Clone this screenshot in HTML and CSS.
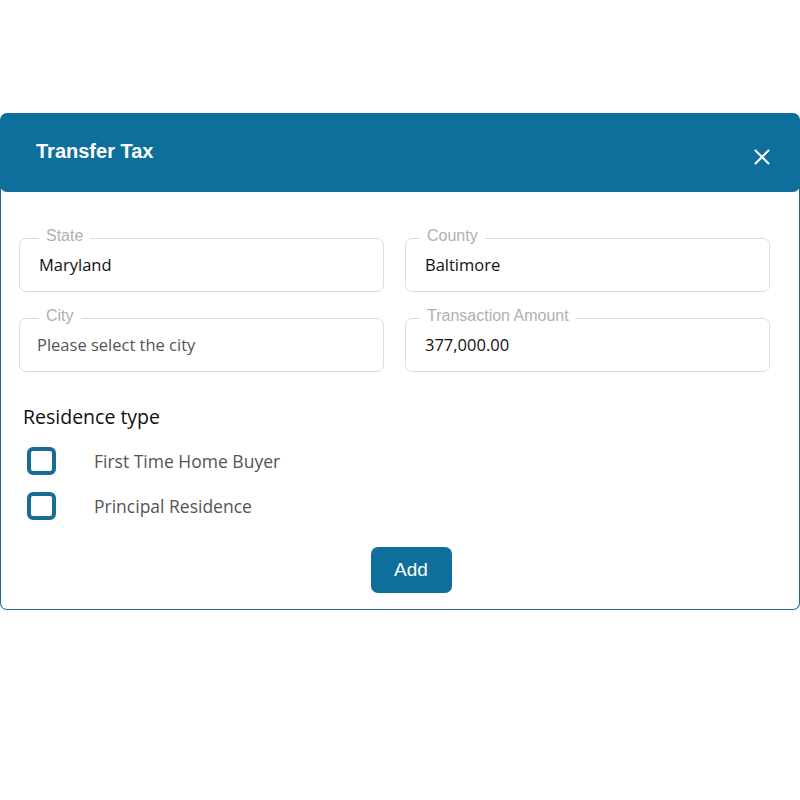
FILE: index.html
```html
<!DOCTYPE html>
<html lang="en">
<head>
<meta charset="utf-8">
<title>Transfer Tax</title>
<link rel="stylesheet" href="styles.css">
</head>
<body>
<div class="dialog">
  <div class="dialog-header">
    <h1 class="dialog-title">Transfer Tax</h1>
    <button class="close-btn" aria-label="Close">
      <svg width="16" height="16" viewBox="0 0 16 16"><path d="M1.5 1.5 L14.5 14.5 M14.5 1.5 L1.5 14.5" stroke="#ffffff" stroke-width="2" stroke-linecap="round" fill="none"/></svg>
    </button>
  </div>
  <div class="dialog-body">
    <div class="field-grid">
      <div class="field field-left">
        <span class="field-label">State</span>
        <span class="field-value">Maryland</span>
      </div>
      <div class="field field-right">
        <span class="field-label">County</span>
        <span class="field-value">Baltimore</span>
      </div>
      <div class="field field-left">
        <span class="field-label">City</span>
        <span class="field-value placeholder">Please select the city</span>
      </div>
      <div class="field field-right">
        <span class="field-label">Transaction Amount</span>
        <span class="field-value">377,000.00</span>
      </div>
    </div>
    <h2 class="section-title">Residence type</h2>
    <div class="check-list">
      <label class="check-row"><span class="check-box"></span><span class="check-text">First Time Home Buyer</span></label>
      <label class="check-row"><span class="check-box"></span><span class="check-text">Principal Residence</span></label>
    </div>
    <div class="actions">
      <button class="add-btn">Add</button>
    </div>
  </div>
</div>
</body>
</html>
```
FILE: styles.css
```css
html, body {
  margin: 0;
  padding: 0;
  background: #ffffff;
}
body {
  font-family: "Open Sans", "Liberation Sans", sans-serif;
  width: 800px;
  height: 800px;
}
.dialog {
  margin-top: 113px;
  width: 800px;
}
.dialog-header {
  height: 79px;
  box-sizing: border-box;
  background: #0f6f9c;
  border-radius: 7px;
  display: flex;
  justify-content: space-between;
  align-items: flex-start;
  padding: 0 30px 0 36px;
  position: relative;
  z-index: 1;
}
.dialog-title {
  margin: 0;
  padding-top: 26px;
  font-family: "Liberation Sans", Arial, sans-serif;
  font-weight: bold;
  font-size: 20px;
  line-height: 24px;
  color: #ffffff;
}
.close-btn {
  margin-top: 36px;
  padding: 0;
  border: none;
  background: transparent;
  width: 16px;
  height: 16px;
  display: flex;
}
.dialog-body {
  margin-top: -8px;
  width: 800px;
  box-sizing: border-box;
  border: 1px solid #1f6d96;
  border-top: none;
  border-radius: 0 0 7px 7px;
  padding: 54px 29px 16px 18px;
}
.field-grid {
  display: grid;
  grid-template-columns: 365px 365px;
  column-gap: 21px;
  row-gap: 26px;
}
.field {
  position: relative;
  height: 54px;
  box-sizing: border-box;
  border: 1px solid #dcdcdc;
  border-radius: 7px;
  display: flex;
  align-items: center;
  padding-left: 19px;
}
.field-label {
  position: absolute;
  top: -12px;
  left: 19px;
  padding: 0 7px;
  background: #ffffff;
  font-family: "Liberation Sans", Arial, sans-serif;
  font-size: 16px;
  line-height: 18px;
  color: #b0b0b0;
}
.field-right .field-label {
  left: 14px;
}
.field-value {
  font-size: 16.5px;
  color: #111111;
  line-height: 22px;
}
.field-value.placeholder {
  color: #555555;
  margin-left: -2px;
}
.section-title {
  margin: 32px 0 0 4px;
  font-size: 19.5px;
  line-height: 26px;
  font-weight: 500;
  color: #111111;
}
.check-list {
  display: flex;
  flex-direction: column;
  gap: 17px;
  margin-top: 17px;
  padding-left: 8px;
}
.check-row {
  display: flex;
  align-items: center;
  gap: 38px;
  height: 28px;
}
.check-box {
  width: 29px;
  height: 28px;
  box-sizing: border-box;
  border: 4.5px solid #1b6c95;
  border-radius: 6px;
  flex: none;
}
.check-text {
  font-size: 17.5px;
  color: #555555;
}
.actions {
  display: flex;
  justify-content: center;
  padding-left: 33px;
  margin-top: 27px;
}
.add-btn {
  width: 81px;
  height: 46px;
  border: none;
  border-radius: 7px;
  background: #0f6f9c;
  color: #ffffff;
  font-family: "Liberation Sans", Arial, sans-serif;
  font-size: 19px;
  padding: 0;
}
```
